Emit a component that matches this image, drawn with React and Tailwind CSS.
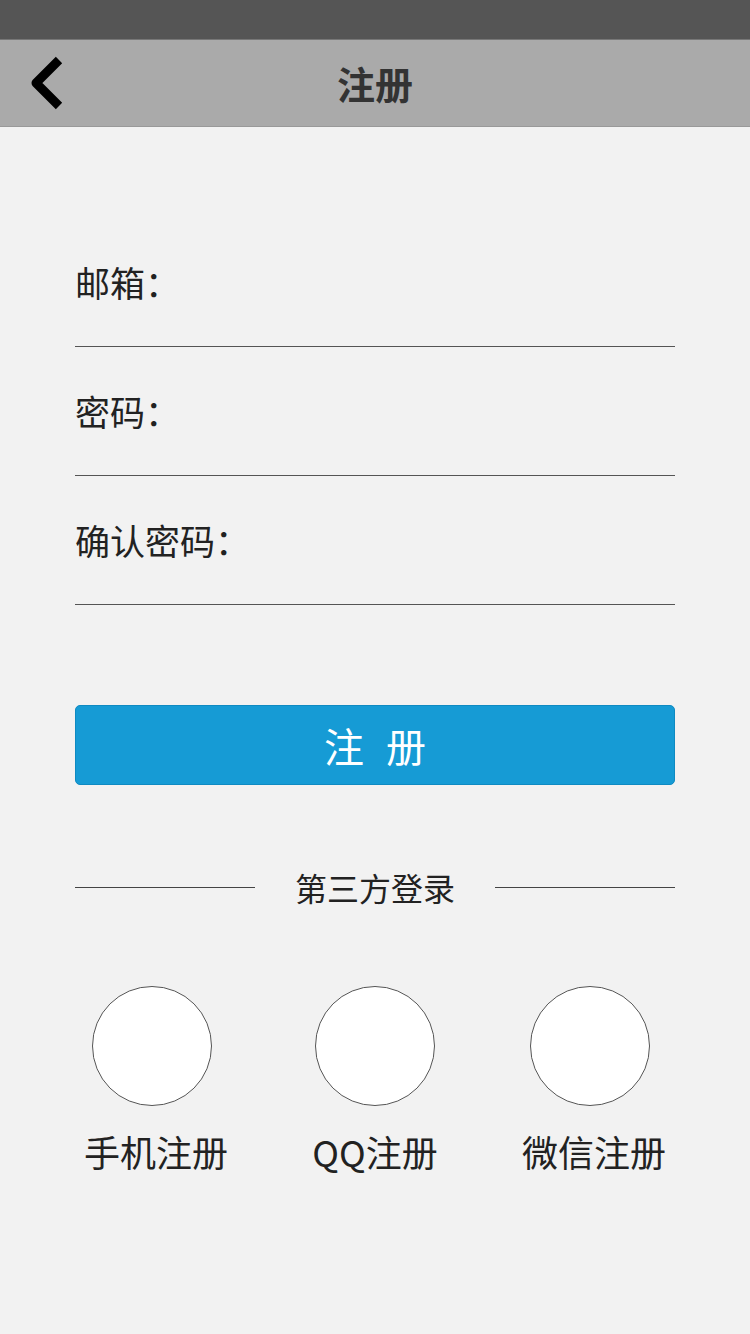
const FONT = { fontFamily: '"Noto Sans CJK SC", "Noto Sans", sans-serif' };

const FIELDS = ['邮箱：', '密码：', '确认密码：'];
const THIRD = [
  { label: '手机注册', shift: 'mr-[8px]' },
  { label: 'QQ注册', shift: '' },
  { label: '微信注册', shift: 'mr-[8px]' },
];

export default function App() {
  return (
    <div className="w-[750px] min-h-[1334px] bg-[#f2f2f2] text-[#333]" style={FONT}>
      {/* Status bar */}
      <div className="h-[40px] bg-[#555555] border-b border-[#777]" />

      {/* Header */}
      <div className="relative h-[87px] bg-[#aaaaaa] border-b border-[#999] flex items-center justify-center">
        <button className="absolute left-[20px] top-[16px] w-[46px] h-[54px] flex items-center justify-center">
          <svg width="40" height="54" viewBox="0 0 40 54">
            <polyline
              points="36,4 13,27 36,50"
              fill="none"
              stroke="#000"
              strokeWidth="9"
              strokeLinecap="butt"
              strokeLinejoin="round"
            />
          </svg>
        </button>
        <h1 className="text-[38px] leading-[46px] font-bold text-[#333]">注册</h1>
      </div>

      {/* Form */}
      <div className="mx-[75px] mt-[91px]">
        {FIELDS.map((f) => (
          <div key={f} className="h-[129px] border-b border-[#555] pt-[44px]">
            <span className="text-[35px] leading-[40px] text-[#222]">{f}</span>
          </div>
        ))}

        <button className="mt-[100px] w-full h-[80px] rounded-[5px] bg-[#169bd5] border border-[#0f8ac2] text-white text-[40px] leading-[48px] flex items-center justify-center gap-[22px]">
          <span>注</span>
          <span>册</span>
        </button>

        <div className="mt-[82px] h-[40px] flex items-center justify-between">
          <div className="w-[180px] h-px bg-[#444]" />
          <span className="text-[32px] leading-[40px] text-[#222]">第三方登录</span>
          <div className="w-[180px] h-px bg-[#444]" />
        </div>
      </div>

      {/* Third-party */}
      <div className="mt-[79px] px-[84px] flex justify-between">
        {THIRD.map((t) => (
          <div key={t.label} className="flex flex-col items-center">
            <div className={`w-[120px] h-[120px] rounded-full bg-white border border-[#555] ${t.shift}`} />
            <span className="mt-[22px] text-[36px] leading-[46px] text-[#222]">{t.label}</span>
          </div>
        ))}
      </div>
    </div>
  );
}
